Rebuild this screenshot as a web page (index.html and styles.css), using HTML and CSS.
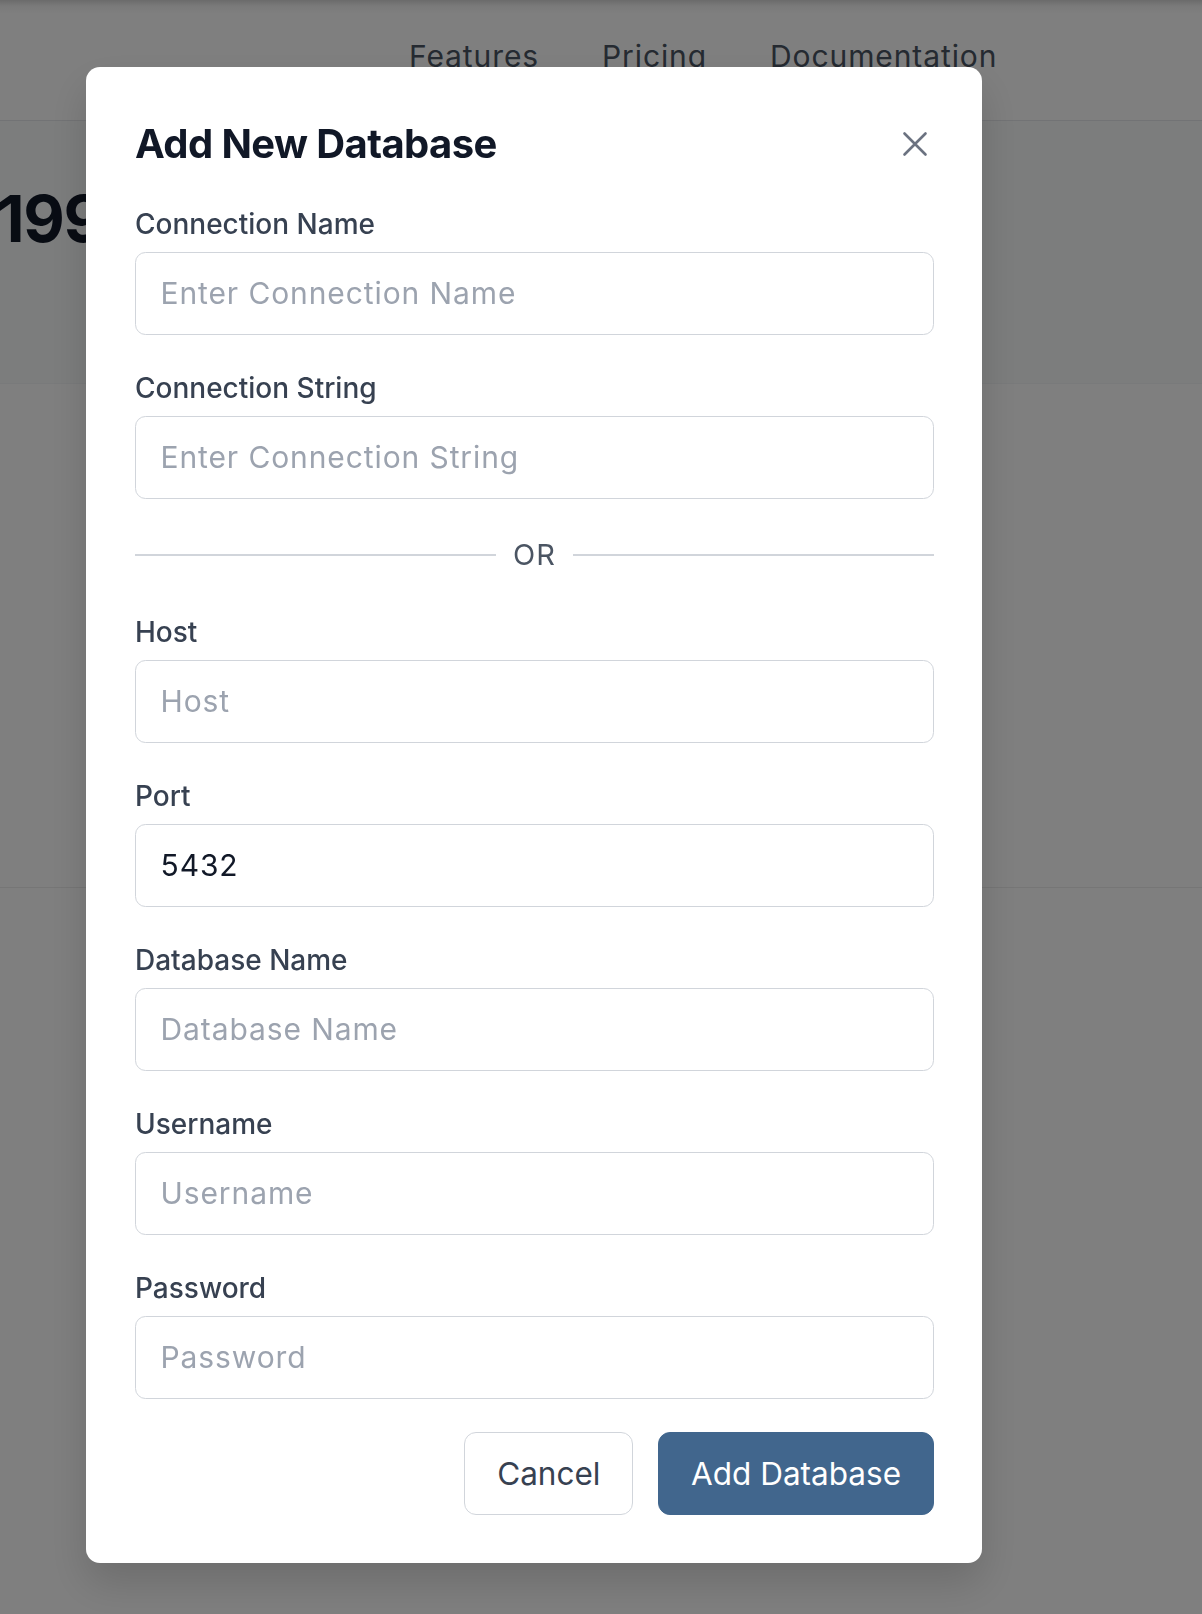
FILE: index.html
```html
<!DOCTYPE html>
<html lang="en">
<head>
<meta charset="utf-8">
<title>Add New Database</title>
<link rel="stylesheet" href="styles.css">
</head>
<body>
<div class="page">
  <header class="site-header">
    <nav class="nav">
      <a class="nav-link" href="#">Features</a>
      <a class="nav-link" href="#">Pricing</a>
      <a class="nav-link" href="#">Documentation</a>
    </nav>
  </header>
  <section class="hero">
    <h1 class="hero-title">199</h1>
  </section>
  <section class="band-white"></section>
  <section class="band-gray"></section>
</div>

<div class="overlay">
  <div class="modal" role="dialog" aria-labelledby="modal-title">
    <div class="modal-header">
      <h2 class="modal-title" id="modal-title">Add New Database</h2>
      <button class="close-btn" type="button" aria-label="Close">
        <svg viewBox="0 0 24 24" width="42" height="42" fill="none" stroke="currentColor" stroke-width="1.5" stroke-linecap="round" stroke-linejoin="round"><path d="M6 18L18 6M6 6l12 12"/></svg>
      </button>
    </div>

    <form class="form">
      <div class="field">
        <label class="field-label">Connection Name</label>
        <input class="field-input" type="text" placeholder="Enter Connection Name">
      </div>
      <div class="field">
        <label class="field-label">Connection String</label>
        <input class="field-input" type="text" placeholder="Enter Connection String">
      </div>

      <div class="divider">
        <span class="divider-line"></span>
        <span class="divider-text">OR</span>
        <span class="divider-line"></span>
      </div>

      <div class="field">
        <label class="field-label">Host</label>
        <input class="field-input" type="text" placeholder="Host">
      </div>
      <div class="field">
        <label class="field-label">Port</label>
        <input class="field-input" type="text" value="5432">
      </div>
      <div class="field">
        <label class="field-label">Database Name</label>
        <input class="field-input" type="text" placeholder="Database Name">
      </div>
      <div class="field">
        <label class="field-label">Username</label>
        <input class="field-input" type="text" placeholder="Username">
      </div>
      <div class="field">
        <label class="field-label">Password</label>
        <input class="field-input" type="password" placeholder="Password">
      </div>

      <div class="modal-footer">
        <button class="btn btn-cancel" type="button">Cancel</button>
        <button class="btn btn-primary" type="button">Add Database</button>
      </div>
    </form>
  </div>
</div>
</body>
</html>
```

FILE: styles.css
```css
html, body {
  margin: 0;
  padding: 0;
}

body {
  font-family: Inter, "Liberation Sans", sans-serif;
  background: #ffffff;
  color: #111827;
  overflow: hidden;
  height: 1614px;
}

/* ---------- underlying page ---------- */
.page {
  display: flex;
  flex-direction: column;
}

.site-header {
  height: 120px;
  border-bottom: 1px solid #e5e7eb;
  background: linear-gradient(to bottom, #d6d6d6 0px, #f4f4f4 6px, #ffffff 14px);
  display: flex;
  align-items: center;
}

.nav {
  display: flex;
  gap: 63px;
  padding-left: 409px;
  margin-top: -9px;
}

.nav-link {
  font-size: 30px;
  color: #4b5563;
  text-decoration: none;
  letter-spacing: 0.03em;
}

.hero {
  height: 262px;
  background: #f9fafb;
  border-bottom: 1px solid #f3f4f6;
}

.hero-title {
  margin: 0;
  padding-top: 60px;
  margin-left: -3px;
  font-size: 64px;
  font-weight: 700;
  line-height: 1.2;
  letter-spacing: -0.02em;
  color: #111827;
}

.band-white {
  height: 503px;
  background: #ffffff;
  border-bottom: 1px solid #ececec;
}

.band-gray {
  flex: 1;
  height: 730px;
  background: #f6f6f6;
}

/* ---------- overlay / modal ---------- */
.overlay {
  position: fixed;
  inset: 0;
  background: rgba(0, 0, 0, 0.5);
  padding: 67px 0 0 86px;
}

.modal {
  width: 896px;
  box-sizing: border-box;
  padding: 49px 48px 48px 49px;
  background: #ffffff;
  border-radius: 14px;
  box-shadow: 0 20px 40px rgba(0, 0, 0, 0.15);
}

.modal-header {
  display: flex;
  justify-content: space-between;
  align-items: center;
  height: 56px;
  margin-bottom: 31px;
}

.modal-title {
  margin: 0;
  font-size: 40px;
  font-weight: 700;
  line-height: 56px;
  letter-spacing: -0.015em;
  color: #111827;
}

.close-btn {
  width: 42px;
  height: 42px;
  padding: 0;
  margin-right: -2px;
  border: 0;
  background: none;
  color: #6b7280;
  display: flex;
  align-items: center;
  justify-content: center;
}

.form {
  display: flex;
  flex-direction: column;
}

.field {
  display: flex;
  flex-direction: column;
  margin-bottom: 32.5px;
}

.field-label {
  font-size: 28px;
  font-weight: 500;
  line-height: 42px;
  color: #374151;
  margin-bottom: 7px;
}

.field-input {
  box-sizing: border-box;
  width: 100%;
  height: 82.5px;
  padding: 0 24.5px;
  border: 1.75px solid #d1d5db;
  border-radius: 10.5px;
  background: #ffffff;
  font-family: Inter, "Liberation Sans", sans-serif;
  font-size: 30px;
  letter-spacing: 0.03em;
  color: #111827;
  outline: none;
}

.field-input::placeholder {
  color: #9ca3af;
  opacity: 1;
}

.divider {
  display: flex;
  align-items: center;
  height: 51px;
  margin: -2px 0 31px;
}

.divider-line {
  flex: 1;
  height: 2px;
  background: #d1d5db;
}

.divider-text {
  padding: 0 17px;
  font-size: 29px;
  letter-spacing: 0.04em;
  color: #4b5563;
}

.modal-footer {
  display: flex;
  justify-content: flex-end;
  gap: 24.5px;
  margin-top: 1px;
}

.btn {
  height: 83px;
  padding: 0 32px;
  border-radius: 12px;
  font-family: Inter, "Liberation Sans", sans-serif;
  font-size: 31.5px;
  line-height: 1;
  cursor: pointer;
}

.btn-cancel {
  background: #ffffff;
  border: 1.75px solid #d1d5db;
  color: #374151;
}

.btn-primary {
  background: #41668d;
  border: 1.75px solid #41668d;
  color: #ffffff;
}
```
